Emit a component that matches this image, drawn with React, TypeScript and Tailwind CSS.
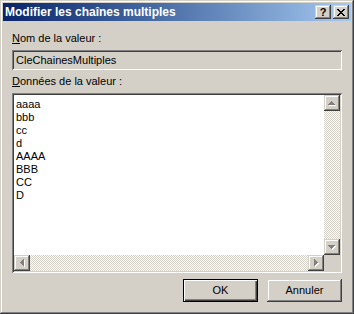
import React from 'react';

const raised =
  'shadow-[inset_-1px_-1px_#404040,inset_1px_1px_#d4d0c8,inset_-2px_-2px_#808080,inset_2px_2px_#ffffff]';
const sunken =
  'shadow-[inset_1px_1px_#808080,inset_-1px_-1px_#ffffff,inset_2px_2px_#404040,inset_-2px_-2px_#d4d0c8]';
const track =
  'bg-[repeating-conic-gradient(#d4d0c8_0%_25%,#ffffff_0%_50%)] bg-[length:2px_2px]';

const arrows: Record<string, number[][]> = {
  up: [[7, 6, 1], [6, 7, 3], [5, 8, 5], [4, 9, 7]],
  down: [[4, 6, 7], [5, 7, 5], [6, 8, 3], [7, 9, 1]],
  left: [[6, 7, 1], [7, 6, 3], [8, 5, 5], [9, 4, 7]],
  right: [[6, 4, 7], [7, 5, 5], [8, 6, 3], [9, 7, 1]],
};

function ScrollButton({ dir }: { dir: 'up' | 'down' | 'left' | 'right' }) {
  const horizontal = dir === 'left' || dir === 'right';
  return (
    <div className={`w-[16px] h-[16px] shrink-0 bg-[#d4d0c8] ${raised}`}>
      <svg width="16" height="16" shapeRendering="crispEdges">
        {arrows[dir].map(([a, b, n], i) =>
          horizontal ? (
            <g key={i}>
              <rect x={a + 1} y={b + 1} width={1} height={n} fill="#ffffff" />
              <rect x={a} y={b} width={1} height={n} fill="#808080" />
            </g>
          ) : (
            <g key={i}>
              <rect x={a + 1} y={b + 1} width={n} height={1} fill="#ffffff" />
              <rect x={a} y={b} width={n} height={1} fill="#808080" />
            </g>
          )
        )}
      </svg>
    </div>
  );
}

function TitleButton({ children }: { children: React.ReactNode }) {
  return (
    <div className={`w-[16px] h-[14px] bg-[#d4d0c8] flex items-center justify-center ${raised}`}>
      {children}
    </div>
  );
}

function Button({ label, isDefault }: { label: string; isDefault?: boolean }) {
  return (
    <div
      className={
        isDefault
          ? 'w-[75px] h-[23px] border border-black bg-[#d4d0c8] flex items-center justify-center shadow-[inset_1px_1px_#ffffff,inset_-1px_-1px_#404040,inset_-2px_-2px_#808080]'
          : `w-[75px] h-[23px] bg-[#d4d0c8] flex items-center justify-center ${raised}`
      }
    >
      {label}
    </div>
  );
}

const lines = ['aaaa', 'bbb', 'cc', 'd', 'AAAA', 'BBB', 'CC', 'D'];

export default function App() {
  return (
    <div
      className={`w-[354px] h-[314px] bg-[#d4d0c8] p-[3px] flex flex-col font-['Liberation_Sans',Arial,sans-serif] text-[11px] text-black shadow-[inset_-1px_-1px_#404040,inset_1px_1px_#d4d0c8,inset_-2px_-2px_#808080,inset_2px_2px_#ffffff]`}
    >
      {/* title bar */}
      <div className="h-[18px] flex items-center pl-[2px] pr-[2px] bg-gradient-to-r from-[#0a246a] to-[#a6caf0]">
        <span className="flex-1 font-bold text-white text-[12px] leading-[14px]">
          Modifier les chaînes multiples
        </span>
        <div className="flex">
          <TitleButton>
            <span className="font-bold text-[11px] leading-[11px] text-black">?</span>
          </TitleButton>
          <div className="w-[2px]" />
          <TitleButton>
            <svg width="8" height="7" shapeRendering="crispEdges">
              {[0, 1, 2, 3, 4, 5, 6].map((i) => (
                <g key={i}>
                  <rect x={i} y={i} width={2} height={1} fill="#000" />
                  <rect x={6 - i} y={i} width={2} height={1} fill="#000" />
                </g>
              ))}
            </svg>
          </TitleButton>
        </div>
      </div>

      {/* body */}
      <div className="flex-1 flex flex-col pl-[9px] pt-[11px]">
        <div className="leading-[13px]">
          <span className="underline underline-offset-[1px]">N</span>om de la valeur :
        </div>
        <div className={`mt-[5px] w-[330px] h-[20px] bg-[#d4d0c8] flex items-center pl-[4px] ${sunken}`}>
          CleChainesMultiples
        </div>

        <div className="mt-[5px] leading-[13px]">
          <span className="underline underline-offset-[1px]">D</span>onnées de la valeur :
        </div>
        <div className={`mt-[5px] w-[330px] h-[180px] bg-white p-[2px] flex flex-col ${sunken}`}>
          <div className="flex-1 flex min-h-0">
            <div className="flex-1 pl-[2px] pt-[3px] leading-[13px]">
              {lines.map((l) => (
                <div key={l}>{l}</div>
              ))}
            </div>
            <div className="w-[16px] flex flex-col">
              <ScrollButton dir="up" />
              <div className={`flex-1 ${track}`} />
              <ScrollButton dir="down" />
            </div>
          </div>
          <div className="h-[16px] flex">
            <ScrollButton dir="left" />
            <div className={`flex-1 ${track}`} />
            <ScrollButton dir="right" />
            <div className="w-[16px] h-[16px] bg-[#d4d0c8]" />
          </div>
        </div>

        <div className="mt-[6px] w-[330px] flex justify-end gap-[9px]">
          <Button label="OK" isDefault />
          <Button label="Annuler" />
        </div>
      </div>
    </div>
  );
}
